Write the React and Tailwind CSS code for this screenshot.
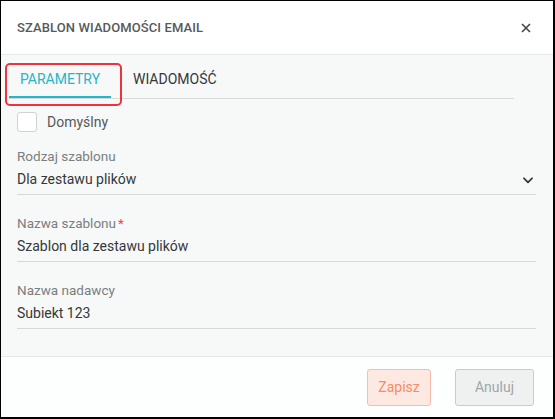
import { useState } from 'react'

function Field({ label, value, required, select }) {
  return (
    <div className="pt-[19px]">
      <div className="text-[13.5px] text-[#7a7f7f] leading-[18px]">
        {label}
        {required && <span className="text-[#e8445a] ml-[2px]">*</span>}
      </div>
      <div className="flex items-center justify-between border-b border-[#d6d9d9] h-[30px] pr-[1px]">
        <span className="text-[14px] text-[#333838]">{value}</span>
        {select && (
          <svg width="14" height="14" viewBox="0 0 24 24" fill="none" stroke="#263238" strokeWidth="3" strokeLinecap="round" strokeLinejoin="round">
            <path d="M5 9l7 7 7-7" />
          </svg>
        )}
      </div>
    </div>
  )
}

export default function App() {
  const [tab, setTab] = useState(0)
  const [checked, setChecked] = useState(false)

  return (
    <div className="w-[555px] h-[419px] bg-black pt-[1px] pl-[1px] pr-[2px] pb-[2px]" style={{ fontFamily: 'Roboto, "Liberation Sans", sans-serif' }}>
      <div className="h-full bg-white flex flex-col">
        {/* header */}
        <div className="h-[54px] flex items-center justify-between pl-[16px] pr-[22px] border-b border-[#e6e8e8]">
          <h1 className="text-[13px] font-medium text-[#555a5a] tracking-[0.1px]">SZABLON WIADOMOŚCI EMAIL</h1>
          <svg width="10" height="10" viewBox="0 0 10 10" stroke="#444" strokeWidth="1.6">
            <path d="M1 1l8 8M9 1l-8 8" />
          </svg>
        </div>

        {/* body */}
        <div className="h-[302px] bg-[#f7f8f8] border-b border-[#e6e8e8] px-[16px]">
          <div className="flex border-b border-[#d6d9d9] mt-[2px] mr-[23px] ml-[-8px] h-[42px] items-end relative">
            <button onClick={() => setTab(0)} className={`h-[42px] w-[102px] flex items-center justify-center pt-[7px] text-[14px] border-b-2 ${tab === 0 ? 'text-[#26b6c8] border-[#26b6c8]' : 'text-[#333] border-transparent'}`}>
              PARAMETRY
            </button>
            <button onClick={() => setTab(1)} className={`h-[42px] px-[22px] flex items-center pt-[7px] text-[14px] border-b-2 ${tab === 1 ? 'text-[#26b6c8] border-[#26b6c8]' : 'text-[#333838] border-transparent'}`}>
              WIADOMOŚĆ
            </button>
            <div className="absolute left-[-4px] top-[6px] w-[117px] h-[43px] border-2 border-[#f0323c] rounded-[5px] pointer-events-none" />
          </div>

          <label className="flex items-center gap-[10px] mt-[11px] cursor-pointer">
            <input type="checkbox" checked={checked} onChange={() => setChecked(!checked)} className="appearance-none w-[20px] h-[20px] bg-white border border-[#cfd3d3] rounded-[3px]" />
            <span className="text-[14px] text-[#555a5a] pt-[2px]">Domyślny</span>
          </label>

          <div className="pr-[1px] mt-[-5px]">
            <Field label="Rodzaj szablonu" value="Dla zestawu plików" select />
            <Field label="Nazwa szablonu" value="Szablon dla zestawu plików" required />
            <Field label="Nazwa nadawcy" value="Subiekt 123" />
          </div>
        </div>

        {/* footer */}
        <div className="flex-1 flex items-center justify-end gap-[24px] pr-[19px] bg-[#fdfefe]">
          <button className="h-[37px] w-[64px] bg-[#fde9e2] border border-[#f8bda8] rounded-[3px] text-[14px] text-[#f58c66]">Zapisz</button>
          <button className="h-[37px] w-[79px] bg-[#eff1f1] border border-[#c5cccc] rounded-[3px] text-[14px] text-[#a1a6a6]">Anuluj</button>
        </div>
      </div>
    </div>
  )
}
